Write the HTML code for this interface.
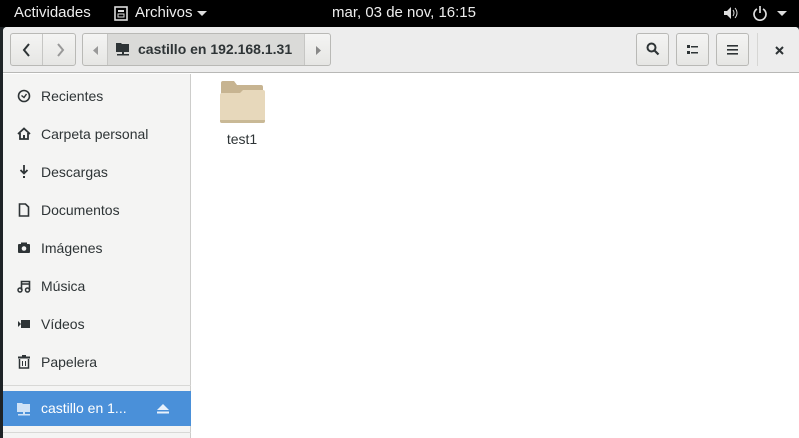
<!DOCTYPE html><html><head><meta charset="utf-8"><style>
*{margin:0;padding:0;box-sizing:border-box}
body{width:799px;height:438px;overflow:hidden;background:#1e2326;font-family:"Liberation Sans","DejaVu Sans",sans-serif;position:relative}
.top{position:absolute;left:0;top:0;width:799px;height:27px;background:#000;color:#eee;font-size:15px}
.top span{position:absolute;top:4px}
.win{position:absolute;left:3px;top:27px;width:796px;height:411px;background:#fff;border-radius:4px 4px 0 0;overflow:hidden}
.hdr{position:absolute;left:0;top:0;width:796px;height:46px;background:#ededed;border-bottom:1px solid #b8b8b6}
.btn{position:absolute;top:6px;height:33px;border:1px solid #b9b9b6;background:linear-gradient(#f4f4f3,#e6e6e4);border-radius:3px}
.side{position:absolute;left:0;top:47px;width:188px;height:364px;background:#f4f4f3;border-right:1px solid #cdcdcb}
.it{position:absolute;left:0;width:188px;height:38px;font-size:14px;color:#2e3436}
.it span{position:absolute;left:38px;top:11px}
.it svg{position:absolute;left:14px;top:12px}
</style></head><body>
<div class="top">
<span style="left:14px">Actividades</span>
<svg style="position:absolute;left:114px;top:6px" width="14" height="15"><rect x="1" y="1" width="12" height="13" fill="none" stroke="#ddd" stroke-width="1.6"/><rect x="4" y="4" width="6" height="2" fill="#ddd"/><rect x="4" y="8" width="6" height="3" fill="none" stroke="#ddd"/></svg>
<span style="left:135px">Archivos</span>
<svg style="position:absolute;left:197px;top:11px" width="10" height="6"><path d="M0 0h10L5 5z" fill="#ddd"/></svg>
<span style="left:332px">mar, 03 de nov, 16:15</span>
<svg style="position:absolute;left:723px;top:6px" width="16" height="14"><path d="M1 5h3l4-4v12l-4-4H1z" fill="#ddd"/><path d="M10 4q2 3 0 6M12 2q4 5 0 10" stroke="#ddd" fill="none"/></svg>
<svg style="position:absolute;left:752px;top:5px" width="16" height="16"><path d="M5 4a6 6 0 1 0 6 0" stroke="#ddd" stroke-width="1.7" fill="none"/><path d="M8 1v7" stroke="#ddd" stroke-width="1.7"/></svg>
<svg style="position:absolute;left:777px;top:11px" width="10" height="6"><path d="M0 0h10L5 5z" fill="#ddd"/></svg>
</div>
<div class="win">
<div class="hdr">
<div class="btn" style="left:7px;width:66px"></div>
<div style="position:absolute;left:39px;top:7px;width:1px;height:31px;background:#c6c6c4"></div>
<svg style="position:absolute;left:19px;top:15px" width="10" height="16"><path d="M7 2L2 8l5 6" stroke="#2e3436" stroke-width="2" fill="none"/></svg>
<svg style="position:absolute;left:52px;top:15px" width="10" height="16"><path d="M3 2l5 6-5 6" stroke="#999" stroke-width="2" fill="none"/></svg>
<div class="btn" style="left:79px;width:249px"></div>
<div style="position:absolute;left:104px;top:7px;width:198px;height:31px;background:#dadad8;border-left:1px solid #c6c6c4;border-right:1px solid #c6c6c4"></div>
<svg style="position:absolute;left:90px;top:19px" width="6" height="9"><path d="M5 0v9L0 4.5z" fill="#999"/></svg>
<svg style="position:absolute;left:313px;top:19px" width="6" height="9"><path d="M0 0v9l5-4.5z" fill="#888"/></svg>
<svg style="position:absolute;left:113px;top:15px" width="14" height="14"><path d="M0 1h5l1 1h7v8H0z" fill="#2e3436"/><rect x="6" y="10" width="2" height="2" fill="#2e3436"/><rect x="1" y="12" width="12" height="1.5" fill="#2e3436"/></svg>
<div style="position:absolute;left:135px;top:14px;font-size:14px;font-weight:bold;color:#2e3436">castillo en 192.168.1.31</div>
<div class="btn" style="left:633px;width:33px"></div>
<svg style="position:absolute;left:643px;top:15px" width="14" height="14"><circle cx="5.5" cy="5.5" r="4" stroke="#2e3436" stroke-width="2" fill="none"/><path d="M8.5 8.5l4 4" stroke="#2e3436" stroke-width="2.2"/></svg>
<div class="btn" style="left:673px;width:33px"></div>
<svg style="position:absolute;left:684px;top:18px" width="12" height="10"><rect x="0" y="0" width="3" height="3" fill="#2e3436"/><rect x="4" y="1" width="7" height="1.5" fill="#2e3436"/><rect x="0" y="6" width="3" height="3" fill="#2e3436"/><rect x="4" y="7" width="7" height="1.5" fill="#2e3436"/></svg>
<div class="btn" style="left:713px;width:33px"></div>
<svg style="position:absolute;left:724px;top:17px" width="11" height="11"><rect y="1" width="11" height="1.6" fill="#2e3436"/><rect y="5" width="11" height="1.6" fill="#2e3436"/><rect y="9" width="11" height="1.6" fill="#2e3436"/></svg>
<div style="position:absolute;left:754px;top:6px;width:1px;height:33px;background:#d6d6d4"></div>
<svg style="position:absolute;left:772px;top:19px" width="9" height="9"><path d="M1 1l7 7M8 1l-7 7" stroke="#2e3436" stroke-width="2"/></svg>
</div>
<div class="side">
<div class="it" style="top:3px"><svg width="14" height="14"><circle cx="7" cy="7" r="5.5" stroke="#2e3436" stroke-width="1.6" fill="none"/><path d="M4.5 6.5l2.5 2 2.5-3.5" stroke="#2e3436" stroke-width="1.4" fill="none"/></svg><span>Recientes</span></div>
<div class="it" style="top:41px"><svg width="14" height="14"><path d="M1 7L7 1.5 13 7M3 6v6h8V6" stroke="#2e3436" stroke-width="1.8" fill="none"/><rect x="6" y="8" width="2" height="4" fill="#2e3436"/></svg><span>Carpeta personal</span></div>
<div class="it" style="top:79px"><svg width="14" height="14"><path d="M7 0v8M3.5 5l3.5 3.5L10.5 5" stroke="#2e3436" stroke-width="1.8" fill="none"/><rect x="6" y="11" width="2" height="2" fill="#2e3436"/></svg><span>Descargas</span></div>
<div class="it" style="top:117px"><svg width="14" height="14"><path d="M2.5 1h6l3 3v9h-9z" stroke="#2e3436" stroke-width="1.6" fill="none"/></svg><span>Documentos</span></div>
<div class="it" style="top:155px"><svg width="14" height="14"><rect x="1" y="3" width="12" height="9" rx="1" fill="#2e3436"/><rect x="4" y="1.5" width="6" height="2" fill="#2e3436"/><circle cx="7" cy="7.5" r="2.3" fill="#f4f4f3"/></svg><span>Imágenes</span></div>
<div class="it" style="top:193px"><svg width="14" height="14"><path d="M4.5 11V2.5h8V11M4.5 5h8" stroke="#2e3436" stroke-width="1.6" fill="none"/><circle cx="3" cy="11" r="2" stroke="#2e3436" stroke-width="1.5" fill="none"/><circle cx="10.5" cy="11" r="2" stroke="#2e3436" stroke-width="1.5" fill="none"/></svg><span>Música</span></div>
<div class="it" style="top:231px"><svg width="14" height="14"><path d="M1 4l3 3-3 3z" fill="#2e3436"/><rect x="4" y="3" width="9" height="8" fill="#2e3436"/></svg><span>Vídeos</span></div>
<div class="it" style="top:269px"><svg width="14" height="14"><rect x="1" y="1.5" width="12" height="2" fill="#2e3436"/><rect x="5" y="0" width="4" height="2" fill="#2e3436"/><path d="M2.5 4v9h9V4" stroke="#2e3436" stroke-width="1.5" fill="none"/><path d="M5.5 6v5M8.5 6v5" stroke="#2e3436"/></svg><span>Papelera</span></div>
<div style="position:absolute;left:0;top:311px;width:188px;height:1px;background:#d8d8d6"></div>
<div class="it" style="top:317px;height:35px;background:#4a90d9;color:#fff"><svg width="14" height="14" style="top:11px"><path d="M0 1h5l1 1h7v8H0z" fill="#cfe2f6"/><rect x="6" y="10" width="2" height="2" fill="#cfe2f6"/><rect x="1" y="12" width="12" height="1.5" fill="#cfe2f6"/></svg><span style="top:9px">castillo en 1...</span>
<svg style="left:153px;top:12px" width="14" height="12"><path d="M7 1l6 6H1z" fill="#e8f1fb"/><rect x="1" y="8.5" width="12" height="2" fill="#e8f1fb"/></svg></div>
<div style="position:absolute;left:0;top:358px;width:188px;height:1px;background:#d8d8d6"></div>
</div>
<svg style="position:absolute;left:217px;top:53px" width="45" height="44"><path d="M1 3q0-2 2-2h11l3 4h24q2 0 2 2v34H1z" fill="#c7b491"/><path d="M0 15q0-2 2-2h18l3-3h20q2 0 2 2v29q0 2-2 2H2q-2 0-2-2z" fill="#e7d8bb"/><path d="M0 40h45v1q0 2-2 2H2q-2 0-2-2z" fill="#c9b996"/></svg>
<div style="position:absolute;left:206px;top:104px;width:66px;text-align:center;font-size:14px;color:#2e3436">test1</div>
</div>
</body></html>
